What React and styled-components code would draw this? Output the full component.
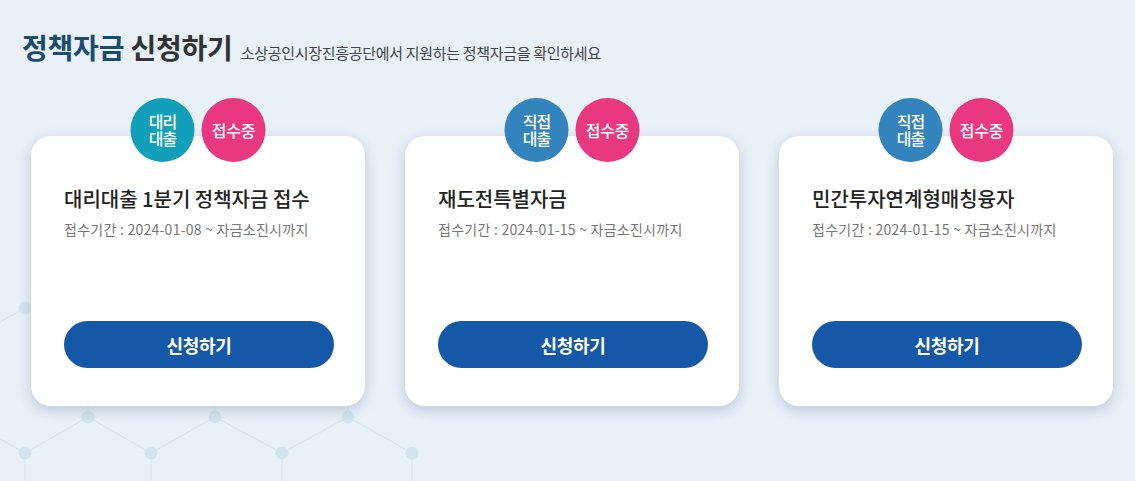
import React from "react";
import styled, { createGlobalStyle } from "styled-components";

const GlobalStyle = createGlobalStyle`
  html, body { margin: 0; padding: 0; }
  body {
    background: #e8f0f8;
    font-family: "Noto Sans CJK KR", "Noto Sans", sans-serif;
  }
`;

const Page = styled.div`
  position: relative;
  width: 1135px;
  height: 481px;
  overflow: hidden;
  background: #e8f0f8;
`;

const Pattern = styled.svg`
  position: absolute;
  left: 0;
  top: 0;
  z-index: 0;
`;

const Content = styled.main`
  position: relative;
  z-index: 1;
  padding: 33px 0 0 22px;
`;

const Header = styled.header`
  display: flex;
  align-items: baseline;
  gap: 8px;
`;

const Title = styled.h2`
  margin: 0;
  font-size: 28px;
  line-height: 1;
  font-weight: 700;
  letter-spacing: -0.2px;
  color: #333;
`;

const Accent = styled.span`
  color: #1a4b70;
`;

const Sub = styled.span`
  font-size: 15px;
  color: #444;
  letter-spacing: -0.3px;
`;

const CardRow = styled.section`
  display: flex;
  gap: 40px;
  margin-top: 35px;
  padding-left: 9px;
`;

const Card = styled.article`
  position: relative;
  box-sizing: border-box;
  width: 334px;
  height: 270px;
  margin-top: 38px;
  padding: 51px 32px 38px 33px;
  display: flex;
  flex-direction: column;
  background: #fff;
  border-radius: 20px;
  box-shadow: 0 4px 14px rgba(30, 60, 100, 0.22);
`;

const Badges = styled.div`
  position: absolute;
  top: -38px;
  left: 50%;
  transform: translateX(-50%);
  display: flex;
  gap: 7px;
`;

const Badge = styled.div`
  width: 64px;
  height: 64px;
  border-radius: 50%;
  background: ${(p) => p.$bg};
  color: #fff;
  display: flex;
  align-items: center;
  justify-content: center;
  text-align: center;
  font-size: 16px;
  line-height: 17px;
  font-weight: 500;
  letter-spacing: ${(p) => (p.$wide ? "-0.2px" : "-1px")};
  white-space: pre-line;
`;

const CardTitle = styled.h3`
  margin: 0;
  font-size: 20px;
  line-height: 24px;
  font-weight: 500;
  color: #222;
  letter-spacing: 0;
`;

const Period = styled.p`
  margin: 8px 0 0;
  font-size: 14px;
  line-height: 20px;
  color: #777;
  letter-spacing: 0.25px;
`;

const ApplyButton = styled.button`
  margin-top: auto;
  width: 270px;
  height: 47px;
  border: none;
  border-radius: 24px;
  background: #1658a8;
  color: #fff;
  font-family: inherit;
  font-size: 18px;
  font-weight: 700;
  letter-spacing: -0.3px;
  cursor: pointer;
`;

const cards = [
  {
    type: "대리\n대출",
    typeColor: "#119fb9",
    title: "대리대출 1분기 정책자금 접수",
    period: "접수기간 : 2024-01-08 ~ 자금소진시까지",
  },
  {
    type: "직접\n대출",
    typeColor: "#3384bd",
    title: "재도전특별자금",
    period: "접수기간 : 2024-01-15 ~ 자금소진시까지",
  },
  {
    type: "직접\n대출",
    typeColor: "#3384bd",
    title: "민간투자연계형매칭융자",
    period: "접수기간 : 2024-01-15 ~ 자금소진시까지",
  },
];

const nodes = [
  [25, 308],
  [88, 417],
  [215, 417],
  [348, 417],
  [25, 453],
  [151, 453],
  [282, 453],
  [412, 453],
];

const edges = [
  [0, 322, 25, 308],
  [25, 308, 88, 344],
  [88, 344, 88, 417],
  [215, 344, 215, 417],
  [348, 344, 348, 417],
  [0, 439, 25, 453],
  [25, 453, 88, 417],
  [88, 417, 151, 453],
  [151, 453, 215, 417],
  [215, 417, 282, 453],
  [282, 453, 348, 417],
  [348, 417, 412, 453],
  [25, 453, 25, 481],
  [151, 453, 151, 481],
  [282, 453, 282, 481],
  [412, 453, 412, 481],
];

export default function App() {
  return (
    <Page>
      <GlobalStyle />
      <Pattern width="1135" height="481" viewBox="0 0 1135 481" aria-hidden="true">
        {edges.map(([x1, y1, x2, y2], i) => (
          <line key={i} x1={x1} y1={y1} x2={x2} y2={y2} stroke="#d7e5f0" strokeWidth="1.3" />
        ))}
        {nodes.map(([cx, cy], i) => (
          <circle key={i} cx={cx} cy={cy} r="6.5" fill="#d4e4ee" />
        ))}
      </Pattern>
      <Content>
        <Header>
          <Title>
            <Accent>정책자금</Accent> 신청하기
          </Title>
          <Sub>소상공인시장진흥공단에서 지원하는 정책자금을 확인하세요</Sub>
        </Header>
        <CardRow>
          {cards.map((c, i) => (
            <Card key={i}>
              <Badges>
                <Badge $bg={c.typeColor}>{c.type}</Badge>
                <Badge $bg="#e8387f" $wide>
                  접수중
                </Badge>
              </Badges>
              <CardTitle>{c.title}</CardTitle>
              <Period>{c.period}</Period>
              <ApplyButton>신청하기</ApplyButton>
            </Card>
          ))}
        </CardRow>
      </Content>
    </Page>
  );
}
